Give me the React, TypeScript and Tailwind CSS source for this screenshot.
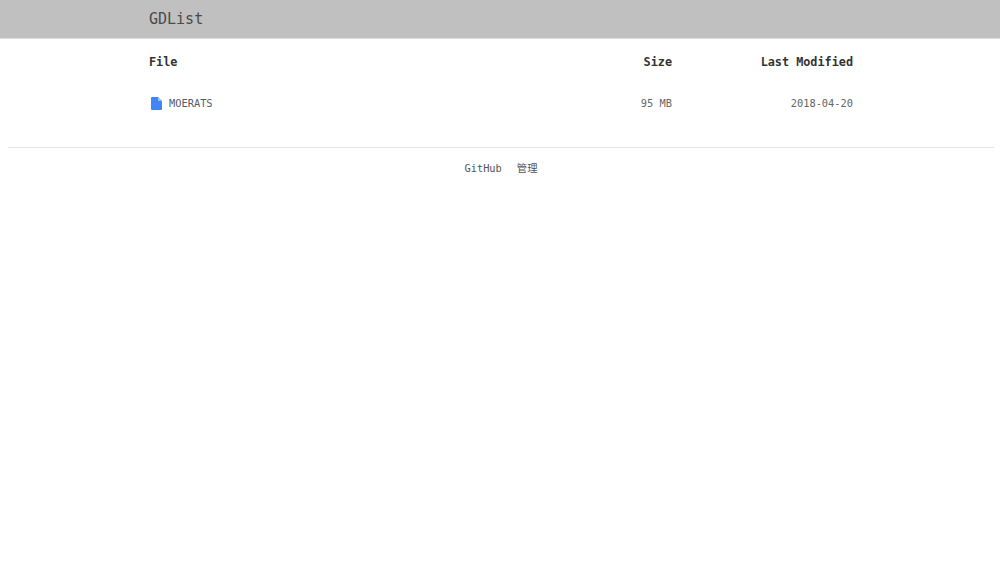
import React from 'react';

const mono = "font-['DejaVu_Sans_Mono','Noto_Sans_CJK_SC',monospace]";

function FileIcon() {
  return (
    <svg width="11" height="13" viewBox="0 0 11 13" className="shrink-0">
      <path d="M1 0h6l4 4v8a1 1 0 0 1-1 1H1a1 1 0 0 1-1-1V1a1 1 0 0 1 1-1z" fill="#4285f4" />
      <path d="M7 0l4 4H8a1 1 0 0 1-1-1z" fill="#a1c2fa" />
    </svg>
  );
}

export default function App() {
  return (
    <div className={`min-h-[573px] bg-white text-[#333] ${mono}`}>
      <header className="h-[39px] bg-[#c0c0c0] border-b border-[#e0e0e0]">
        <div className="w-[704px] ml-[149px] pt-[10px] text-[15px] leading-[18px] text-[#4a4a4a]">GDList</div>
      </header>

      <div className="w-[704px] ml-[149px]">
        <div className="flex pt-[15px] text-[11.8px] leading-[16px] font-bold text-[#333]">
          <div className="flex-1">File</div>
          <div className="w-[100px] text-right">Size</div>
          <div className="w-[181px] text-right">Last Modified</div>
        </div>
        <div className="flex items-center pt-[26px] text-[10.35px] leading-[14px] text-[#666]">
          <div className="flex-1 flex items-center gap-[7px] pl-[2px]">
            <FileIcon />
            <span className="text-[#555b6b]">MOERATS</span>
          </div>
          <div className="w-[100px] text-right">95 MB</div>
          <div className="w-[181px] text-right">2018-04-20</div>
        </div>
      </div>

      <div className="ml-2 mr-[6px] mt-[37px] border-t border-[#e4e4e4]" />
      <div className="flex justify-center gap-[15px] pt-[13px] pl-[2px] text-[10.35px] leading-[14px] text-[#555]">
        <span>GitHub</span>
        <span>管理</span>
      </div>
    </div>
  );
}
